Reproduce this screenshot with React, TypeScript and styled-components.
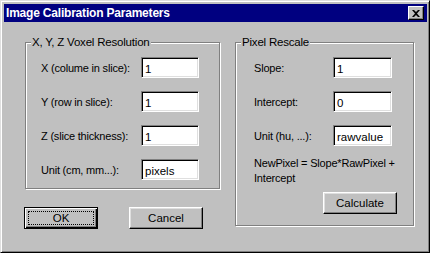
import * as React from 'react';
import styled, { createGlobalStyle } from 'styled-components';

const GlobalStyle = createGlobalStyle`
    html, body {
        margin: 0;
        padding: 0;
        background: #c0c0c0;
    }
    * {
        box-sizing: border-box;
    }
`

const Dialog = styled.div`
    width: 430px;
    height: 253px;
    background: #c0c0c0;
    border: 1px solid;
    border-color: #dfdfdf #000 #000 #dfdfdf;
    box-shadow: inset 1px 1px 0 #fff, inset -1px -1px 0 #808080;
    padding: 3px 2px 2px 3px;
    display: flex;
    flex-direction: column;
    font-family: "Liberation Sans", Arial, sans-serif;
    font-size: 11px;
    letter-spacing: -0.2px;
    color: #000;
`

const TitleBar = styled.div`
    height: 18px;
    background: #000080;
    color: #fff;
    display: flex;
    align-items: center;
    justify-content: space-between;
    padding: 0 3px 0 2px;
`

const Title = styled.span`
    font-weight: bold;
    font-size: 12px;
    letter-spacing: -0.2px;
`

const CloseButton = styled.button`
    width: 16px;
    height: 14px;
    padding: 0;
    background: #c0c0c0;
    border: 1px solid;
    border-color: #fff #000 #000 #fff;
    box-shadow: inset -1px -1px 0 #808080;
    display: flex;
    align-items: center;
    justify-content: center;
`

const Body = styled.div`
    flex: 1;
    display: flex;
    gap: 15px;
    padding: 13px 0 0 21px;
`

const Column = styled.div`
    display: flex;
    flex-direction: column;
    gap: 18px;
`

const Group = styled.fieldset<{$width: number; $height: number}>`
    width: ${({$width}) => $width}px;
    height: ${({$height}) => $height}px;
    margin: 0;
    padding: 0;
    border: 1px solid #808080;
    box-shadow: inset 1px 1px 0 #fff, 1px 1px 0 #fff;
    min-width: 0;
`

const Caption = styled.legend`
    margin-left: 5px;
    padding: 0 1px;
    background: #c0c0c0;
    line-height: 14px;
    font-size: 11.5px;
`

const Fields = styled.div<{$labelPad: number; $inputPad: number}>`
    display: grid;
    grid-template-columns: minmax(0, 1fr) auto;
    row-gap: 13px;
    align-items: center;
    padding: 8px ${({$inputPad}) => $inputPad}px 0 ${({$labelPad}) => $labelPad}px;
`

const Label = styled.label`
    white-space: nowrap;
`

const TextBox = styled.input<{$width: number}>`
    width: ${({$width}) => $width}px;
    height: 21px;
    margin: 0;
    padding: 2px 0 0 3px;
    font: inherit;
    font-size: 11.5px;
    color: #000;
    background: #fff;
    border: 1px solid;
    border-color: #808080 #fff #fff #808080;
    box-shadow: inset 1px 1px 0 #000, inset -1px -1px 0 #dfdfdf;
    outline: none;
`

const Formula = styled.p`
    margin: 10px 12px 0 18px;
    line-height: 15px;
`

const ButtonRow = styled.div`
    display: flex;
    gap: 31px;
    margin-left: -1px;
`

const PushButton = styled.button<{$default?: boolean}>`
    width: 74px;
    height: 22px;
    margin: 0;
    padding: 0;
    font: inherit;
    font-size: 11.5px;
    color: #000;
    background: #c0c0c0;
    border: 1px solid;
    border-color: ${({$default}) => $default ? '#000' : '#fff #000 #000 #fff'};
    box-shadow: ${({$default}) => $default
        ? 'inset 1px 1px 0 #fff, inset -1px -1px 0 #000, inset -2px -2px 0 #808080'
        : 'inset -1px -1px 0 #808080, inset 1px 1px 0 #dfdfdf'};
    display: flex;
    align-items: center;
    justify-content: center;
`

const FocusRing = styled.span`
    display: flex;
    align-items: center;
    justify-content: center;
    width: 66px;
    height: 14px;
    border: 1px dotted #000;
`

const CalcRow = styled.div`
    display: flex;
    justify-content: flex-end;
    padding: 6px 16px 0 0;
`

export default function App() {
    return (
        <>
            <GlobalStyle />
            <Dialog>
                <TitleBar>
                    <Title>Image Calibration Parameters</Title>
                    <CloseButton aria-label="Close">
                        <svg width="8" height="7" viewBox="0 0 8 7">
                            <path d="M0 0h2l2 2 2-2h2L5 3.5 8 7H6L4 5 2 7H0l3-3.5z" fill="#000" />
                        </svg>
                    </CloseButton>
                </TitleBar>
                <Body>
                    <Column>
                        <Group $width={195} $height={154}>
                            <Caption>X, Y, Z Voxel Resolution</Caption>
                            <Fields $labelPad={15} $inputPad={20}>
                                <Label>X (colume in slice):</Label>
                                <TextBox $width={58} defaultValue="1" />
                                <Label>Y (row in slice):</Label>
                                <TextBox $width={58} defaultValue="1" />
                                <Label>Z (slice thickness):</Label>
                                <TextBox $width={58} defaultValue="1" />
                                <Label>Unit (cm, mm...):</Label>
                                <TextBox $width={58} defaultValue="pixels" />
                            </Fields>
                        </Group>
                        <ButtonRow>
                            <PushButton $default><FocusRing>OK</FocusRing></PushButton>
                            <PushButton>Cancel</PushButton>
                        </ButtonRow>
                    </Column>
                    <Group $width={179} $height={191}>
                        <Caption>Pixel Rescale</Caption>
                        <Fields $labelPad={18} $inputPad={21}>
                            <Label>Slope:</Label>
                            <TextBox $width={59} defaultValue="1" />
                            <Label>Intercept:</Label>
                            <TextBox $width={59} defaultValue="0" />
                            <Label>Unit (hu, ...):</Label>
                            <TextBox $width={59} defaultValue="rawvalue" />
                        </Fields>
                        <Formula>NewPixel = Slope*RawPixel + Intercept</Formula>
                        <CalcRow>
                            <PushButton>Calculate</PushButton>
                        </CalcRow>
                    </Group>
                </Body>
            </Dialog>
        </>
    )
}
